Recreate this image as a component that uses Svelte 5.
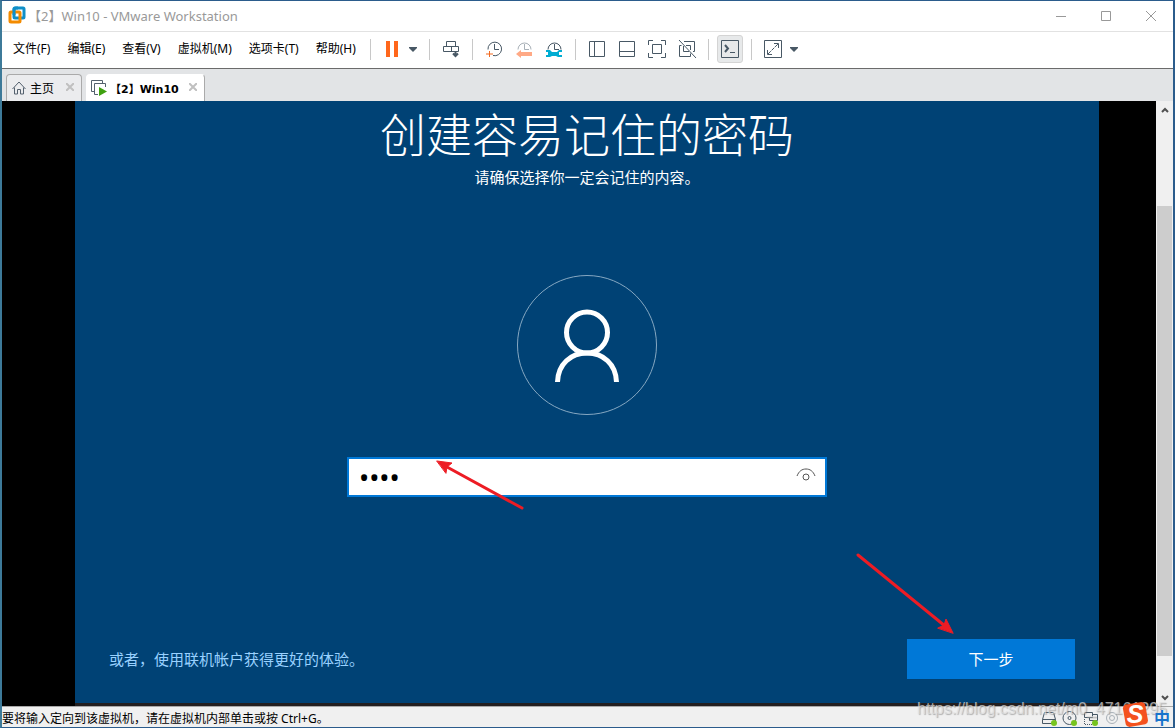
<script lang="ts">
  const menus = ['文件(F)', '编辑(E)', '查看(V)', '虚拟机(M)', '选项卡(T)', '帮助(H)'];

  let password = $state('1234');
  let revealed = $state(false);
</script>

<div class="window">
  <header class="titlebar">
    <svg class="logo" viewBox="0 0 18 18" aria-hidden="true">
      <rect x="6" y="2" width="10" height="10" rx="1" fill="none" stroke="#0f8fc8" stroke-width="3" />
      <rect x="2" y="6" width="10" height="10" rx="1" fill="none" stroke="#f38b00" stroke-width="3" />
      <path d="M6 9V4q0-2 2-2h2" fill="none" stroke="#0f8fc8" stroke-width="3" />
    </svg>
    <span class="title">【2】Win10 - VMware Workstation</span>
    <div class="window-buttons">
      <button aria-label="最小化"><svg viewBox="0 0 12 12"><path d="M1 6.500h10" /></svg></button>
      <button aria-label="最大化"><svg viewBox="0 0 12 12"><path d="M1.500 1.500h9v9h-9z" /></svg></button>
      <button aria-label="关闭"><svg viewBox="0 0 12 12"><path d="M1 1l10 10M11 1L1 11" /></svg></button>
    </div>
  </header>

  <div class="menubar">
    <nav class="menus" aria-label="主菜单">
      {#each menus as menu}
        <button>{menu}</button>
      {/each}
    </nav>

    <div class="toolbar" role="toolbar" aria-label="工具栏">
      <span class="sep"></span>
      <button class="tool" aria-label="挂起">
        <svg viewBox="0 0 20 20"><path d="M4 2h4v16H4zM12 2h4v16h-4z" fill="#ff671b" stroke="none" /></svg>
      </button>
      <button class="caret power" aria-label="电源选项"><svg viewBox="0 0 8 5"><path d="M0 0h8v1L4 5 0 1z" /></svg></button>
      <span class="sep"></span>
      <button class="tool" aria-label="发送 Ctrl+Alt+Del">
        <svg viewBox="0 0 20 20">
          <path d="M5.500 7.500v-5h9v5M2.500 7.500h15v5h-15zM10.500 7.500v5" />
          <path d="M14.500 12v5M12 14.500l2.500 2.500 2.500-2.500" stroke-width="2" />
        </svg>
      </button>
      <span class="sep"></span>
      <button class="tool" aria-label="拍摄快照">
        <svg viewBox="0 0 20 20">
          <path d="M4 10.500a6.800 6.800 0 1 1 5 6M10.500 5v5.500H15" />
          <path d="M5.500 12v6M2 15h7" stroke="#f26a21" />
        </svg>
      </button>
      <button class="tool" aria-label="恢复快照">
        <svg viewBox="0 0 20 20">
          <path d="M4 10.500a6.500 6.500 0 1 1 13 0M10.500 5v5.500H15" stroke="#a9b1b8" />
          <path d="M2 15l5-4v2h11v4H7v2z" fill="#ffa985" stroke="none" />
        </svg>
      </button>
      <button class="tool" aria-label="管理快照">
        <svg viewBox="0 0 20 20">
          <path d="M4 10.500a6.500 6.500 0 1 1 13 0M10.500 5v5.500H15" />
          <path d="M2 11h4l2 2h5l2-2h3v2h-3v3h3v2h-4l-2-1H8l-2 1H2v-2h2v-3H2z" fill="#00acd2" stroke="none" />
        </svg>
      </button>
      <span class="sep"></span>
      <button class="tool" aria-label="显示库">
        <svg viewBox="0 0 20 20"><path d="M2.500 2.500h15v15h-15zM7.500 2.500v15" /></svg>
      </button>
      <button class="tool" aria-label="显示缩略图">
        <svg viewBox="0 0 20 20"><path d="M2.500 2.500h15v15h-15zM2.500 12.500h15" /></svg>
      </button>
      <button class="tool" aria-label="全屏">
        <svg viewBox="0 0 20 20">
          <path d="M5.500 5.500h9v9h-9zM1.500 6V1.500H6M14 1.500h4.500V6M18.500 14v4.500H14M6 18.500H1.500V14" />
        </svg>
      </button>
      <button class="tool" aria-label="Unity 模式">
        <svg viewBox="0 0 20 20"><path d="M7 2.500h10.500v10H16M6.500 7v5.500H12M4.500 6.500h-2v11h11v-3M9 6.500h4.500V11M2 1l17 18" /></svg>
      </button>
      <span class="sep"></span>
      <button class="tool pressed" aria-label="控制台视图" aria-pressed="true">
        <svg viewBox="0 0 20 20"><path d="M1.500 1.500h17v17h-17z" /><path d="M5 6l3 3.500L5 13" stroke-width="2" /><path d="M10 13.500h5" /></svg>
      </button>
      <span class="sep"></span>
      <button class="tool" aria-label="拉伸客户机">
        <svg viewBox="0 0 20 20"><path d="M1.500 1.500h17v17h-17zM11 4.500h4.500V9M4.500 11v4.500H9" /><path d="M5 15L15 5" stroke-dasharray="4 1" /></svg>
      </button>
      <button class="caret" aria-label="拉伸选项"><svg viewBox="0 0 8 5"><path d="M0 0h8v1L4 5 0 1z" /></svg></button>
    </div>
  </div>

  <div class="tabs">
    <div class="tab">
      <svg class="tab-icon" viewBox="0 0 16 16" aria-hidden="true">
        <path d="M1.500 9L8 2l6.500 7M3.500 7.500v6.500h3V9.500h3V14h3V7.500" fill="none" stroke="#54616e" />
      </svg>
      <button class="tab-name">主页</button>
      <button class="tab-close" aria-label="关闭主页"><svg viewBox="0 0 8 8"><path d="M0 0l8 8M8 0L0 8" /></svg></button>
    </div>
    <div class="tab active">
      <svg class="tab-icon" viewBox="0 0 16 16" aria-hidden="true">
        <path d="M3.500 11.500h-3v-11h11v3M7 14.500H3.500v-11h11V7" fill="none" stroke="#54616e" />
        <path d="M8 7l8 4.500L8 16z" fill="#3fa110" />
      </svg>
      <button class="tab-name">【2】Win10</button>
      <button class="tab-close" aria-label="关闭 Win10"><svg viewBox="0 0 8 8"><path d="M0 0l8 8M8 0L0 8" /></svg></button>
    </div>
  </div>

  <div class="viewport">
    <main class="guest">
      <h1>创建容易记住的密码</h1>
      <p class="hint">请确保选择你一定会记住的内容。</p>

      <svg class="avatar" viewBox="0 0 140 140" aria-hidden="true">
        <circle cx="70" cy="70" r="69.500" stroke="#86a8c2" />
        <circle cx="70" cy="57.500" r="20.500" stroke="#fff" stroke-width="5" />
        <path d="M40.500 107C41 89 54 78 70 78s29 11 29.500 29" stroke="#fff" stroke-width="5" />
      </svg>

      <div class="field">
        <input type={revealed ? 'text' : 'password'} aria-label="密码" bind:value={password} />
        <button aria-label="显示密码" onclick={() => (revealed = !revealed)}>
          <svg viewBox="0 0 20 14">
            <path d="M1 8C3 3 6 1 10 1s7 2 9 7" />
            <circle cx="10" cy="9" r="3" />
          </svg>
        </button>
        <svg class="arrow to-field" viewBox="0 0 90 52" aria-hidden="true">
          <path d="M87 49L12 8" />
          <path class="head" d="M2 2l15 2-5 4-1 6z" />
        </svg>
      </div>

      <footer class="actions">
        <a href="#online">或者，使用联机帐户获得更好的体验。</a>
        <div class="next-wrap">
          <button class="next">下一步</button>
          <svg class="arrow to-next" viewBox="0 0 100 82" aria-hidden="true">
            <path d="M3 2l87 71" />
            <path class="head" d="M98 80l-7-14-2 6-6 3z" />
          </svg>
        </div>
      </footer>
    </main>

    <div class="scrollbar" aria-hidden="true">
      <svg viewBox="0 0 8 6"><path d="M1 5l3-3 3 3" /></svg>
      <div class="track"><div class="thumb"></div></div>
      <svg viewBox="0 0 8 6"><path d="M1 1l3 3 3-3" /></svg>
    </div>
  </div>

  <div class="statusbar">
    <span>要将输入定向到该虚拟机，请在虚拟机内部单击或按 Ctrl+G。</span>
    <div class="devices">
      <svg viewBox="0 0 16 16" aria-hidden="true">
        <path d="M1.500 13.500v-4l2-7h9l2 7v4zM1.500 9.500h13" />
        <circle class="on" cx="13" cy="13" r="3" />
      </svg>
      <svg viewBox="0 0 16 16" aria-hidden="true">
        <circle cx="7.500" cy="8" r="6.500" /><circle cx="7.500" cy="8" r="1.500" />
        <circle class="on" cx="12" cy="13" r="3" />
      </svg>
      <svg viewBox="0 0 16 16" aria-hidden="true">
        <path d="M1.500 2.500h8v5h-8zM9.500 4.500h5v6h-8v-3" />
        <path d="M1.500 9v5.500H10" stroke-dasharray="1 1" />
        <circle class="on" cx="12" cy="13" r="3" />
      </svg>
      <svg class="idle" viewBox="0 0 16 16" aria-hidden="true">
        <circle cx="8" cy="8" r="5.500" /><circle cx="8" cy="8" r="2.500" />
      </svg>
    </div>
    <div class="watermark">https://blog.csdn.net/m0_47161295</div>
    <div class="ime">
      <svg viewBox="0 0 28 28" aria-hidden="true">
        <path d="M3 4L21 1q3 0 4 3l3 17q0 3-3 4L8 28q-3 0-4-3L1 8q0-3 2-4z" fill="#f4511e" />
        <text x="14" y="24" text-anchor="middle">S</text>
      </svg>
      <span>中</span>
    </div>
  </div>
</div>

<style>
  :global(body) {
    margin: 0;
  }

  .window {
    box-sizing: border-box;
    min-height: 100vh;
    display: flex;
    flex-direction: column;
    border: solid #2b5c8c;
    border-width: 1px 2px 1px 2px;
    border-left-color: #3d7a99;
    background: #fff;
    color: #000;
    font-family: 'Noto Sans', 'Noto Sans CJK SC', sans-serif;
    font-size: 12px;
    overflow: hidden;
  }

  button {
    padding: 0;
    border: none;
    background: none;
    color: inherit;
    font: inherit;
  }

  .titlebar {
    display: flex;
    align-items: center;
    height: 30px;
    border-bottom: 1px solid #e2e2e2;
  }

  .logo {
    width: 18px;
    height: 18px;
    margin: 0 2px 2px 6px;
  }

  .title {
    padding-bottom: 1px;
    color: #999;
    font-size: 13px;
    line-height: 18px;
  }

  .window-buttons {
    display: flex;
    margin-left: auto;
  }

  .window-buttons button {
    display: grid;
    place-items: center;
    width: 45px;
    height: 30px;
  }

  .window-buttons svg {
    width: 12px;
    height: 12px;
    fill: none;
    stroke: #999;
  }

  .menubar {
    display: flex;
    align-items: center;
    height: 36px;
    border-bottom: 1px solid #6b6b6b;
  }

  .menus {
    display: flex;
    gap: 17px;
    padding: 0 8px 4px 11px;
    white-space: nowrap;
  }

  .toolbar {
    display: flex;
    align-items: center;
    padding-bottom: 2px;
  }

  .sep {
    width: 1px;
    height: 21px;
    margin: 0 6px;
    background: #c8c8c8;
  }

  .tool {
    display: grid;
    place-items: center;
    width: 30px;
    height: 28px;
  }

  .tool svg {
    width: 20px;
    height: 20px;
    fill: none;
    stroke: #485865;
  }

  .pressed {
    width: 26px;
    margin: 0 2px;
    border: 1px solid #d4d4d4;
    border-radius: 3px;
    background: #e7e9ea;
  }

  .caret {
    width: 12px;
    line-height: 0;
  }

  .caret svg {
    width: 8px;
    height: 5px;
    fill: #485865;
  }

  .power {
    margin-right: 4px;
  }

  .tabs {
    display: flex;
    align-items: flex-end;
    gap: 4px;
    height: 32px;
    padding-left: 4px;
    background: #e2e4e6;
  }

  .tab {
    display: flex;
    align-items: center;
    box-sizing: border-box;
    height: 27px;
    padding: 0 7px 0 4px;
    border: 1px solid #aaa;
    border-bottom: none;
    border-radius: 4px 4px 0 0;
    background: #ebecee;
  }

  .tab.active {
    border-color: #fff #aaa #fff #fff;
    background: #fff;
    font-family: 'DejaVu Sans', 'Noto Sans CJK SC', sans-serif;
    font-size: 11px;
    font-weight: bold;
  }

  .tab-icon {
    width: 16px;
    height: 16px;
  }

  .tab-name {
    margin: 0 12px 0 3px;
    padding-bottom: 1px;
  }

  .active .tab-name {
    margin-right: 10px;
  }

  .tab-close {
    padding-bottom: 2px;
    line-height: 0;
  }

  .tab-close svg {
    width: 8px;
    height: 8px;
    fill: none;
    stroke: #c0c0c0;
    stroke-width: 2;
  }

  .viewport {
    flex: 1;
    display: flex;
    background: #000;
  }

  .guest {
    flex: 1;
    display: flex;
    flex-direction: column;
    align-items: center;
    margin: 0 57px 0 73px;
    padding-top: 5px;
    border-bottom: 3px solid #231f20;
    background: #004275;
    color: #fff;
  }

  h1 {
    margin: 0;
    font-family: 'Noto Sans CJK SC', sans-serif;
    font-size: 46px;
    font-weight: 300;
    line-height: 52px;
  }

  .hint {
    margin: 7px 0 0;
    font-size: 15px;
    line-height: 24px;
  }

  .avatar {
    width: 140px;
    height: 140px;
    margin-top: 86px;
    fill: none;
  }

  .field {
    position: relative;
    display: flex;
    align-items: center;
    box-sizing: border-box;
    width: 480px;
    max-width: 100%;
    height: 40px;
    margin-top: 42px;
    border: 2px solid #0078d7;
    background: #fff;
  }

  .field input {
    flex: 1;
    min-width: 0;
    box-sizing: border-box;
    height: 100%;
    padding: 0 10px;
    border: none;
    outline: none;
    background: none;
    color: #000;
    font: 27px 'Noto Sans', sans-serif;
  }

  .field button {
    margin: 0 9px 4px 0;
    line-height: 0;
  }

  .field button svg {
    width: 20px;
    height: 14px;
    fill: none;
    stroke: #555;
  }

  .arrow {
    position: absolute;
    fill: none;
    stroke: #ed1c24;
    stroke-width: 3;
    stroke-linecap: round;
    pointer-events: none;
  }

  .arrow .head {
    fill: #ed1c24;
    stroke-width: 1;
  }

  .to-field {
    top: 0;
    left: 86px;
    width: 90px;
    height: 52px;
  }

  .actions {
    display: flex;
    align-items: center;
    justify-content: space-between;
    align-self: stretch;
    margin-top: auto;
    padding: 0 24px 24px 34px;
    font-size: 15px;
  }

  .actions a {
    padding-bottom: 2px;
    color: #99d1ff;
    text-decoration: none;
  }

  .next-wrap {
    position: relative;
  }

  .next {
    display: block;
    width: 168px;
    height: 40px;
    padding-bottom: 2px;
    background: #0078d7;
  }

  .to-next {
    right: 120px;
    bottom: 44px;
    width: 100px;
    height: 82px;
  }

  .scrollbar {
    display: flex;
    flex-direction: column;
    align-items: center;
    width: 17px;
    background: #f0f0f0;
  }

  .scrollbar svg {
    width: 8px;
    height: 6px;
    margin: 6px 0 5px;
    fill: none;
    stroke: #505050;
    stroke-width: 2;
  }

  .track {
    flex: 1;
    display: flex;
    flex-direction: column;
    align-self: stretch;
    padding: 88px 1px 33px;
  }

  .thumb {
    flex: 1;
    background: #cdcdcd;
  }

  .statusbar {
    position: relative;
    display: flex;
    align-items: center;
    height: 20px;
    border-top: 1px solid #a8a8a8;
    background: #f0f0f0;
  }

  .statusbar > span {
    padding-top: 2px;
  }

  .devices {
    display: flex;
    gap: 5px;
    margin: 2px 53px 0 auto;
  }

  .devices svg {
    width: 16px;
    height: 16px;
    fill: none;
    stroke: #485865;
  }

  .devices .on {
    fill: #76c41f;
    stroke: none;
  }

  .devices .idle {
    stroke: #a9b1b8;
  }

  .watermark {
    position: absolute;
    right: 6px;
    bottom: 8px;
    color: rgba(225, 225, 225, 0.7);
    font: 16px/20px 'Liberation Sans', sans-serif;
    text-shadow: 1px 1px 1px rgba(110, 110, 110, 0.5);
  }

  .ime {
    position: absolute;
    right: 3px;
    bottom: 0;
    display: flex;
    align-items: flex-end;
    gap: 5px;
    color: #1673cc;
    font: bold 16px/20px 'Noto Sans CJK SC', sans-serif;
  }

  .ime svg {
    width: 28px;
    height: 26px;
  }

  .ime text {
    fill: #fff;
    font: bold italic 27px 'Liberation Sans', sans-serif;
  }
</style>
